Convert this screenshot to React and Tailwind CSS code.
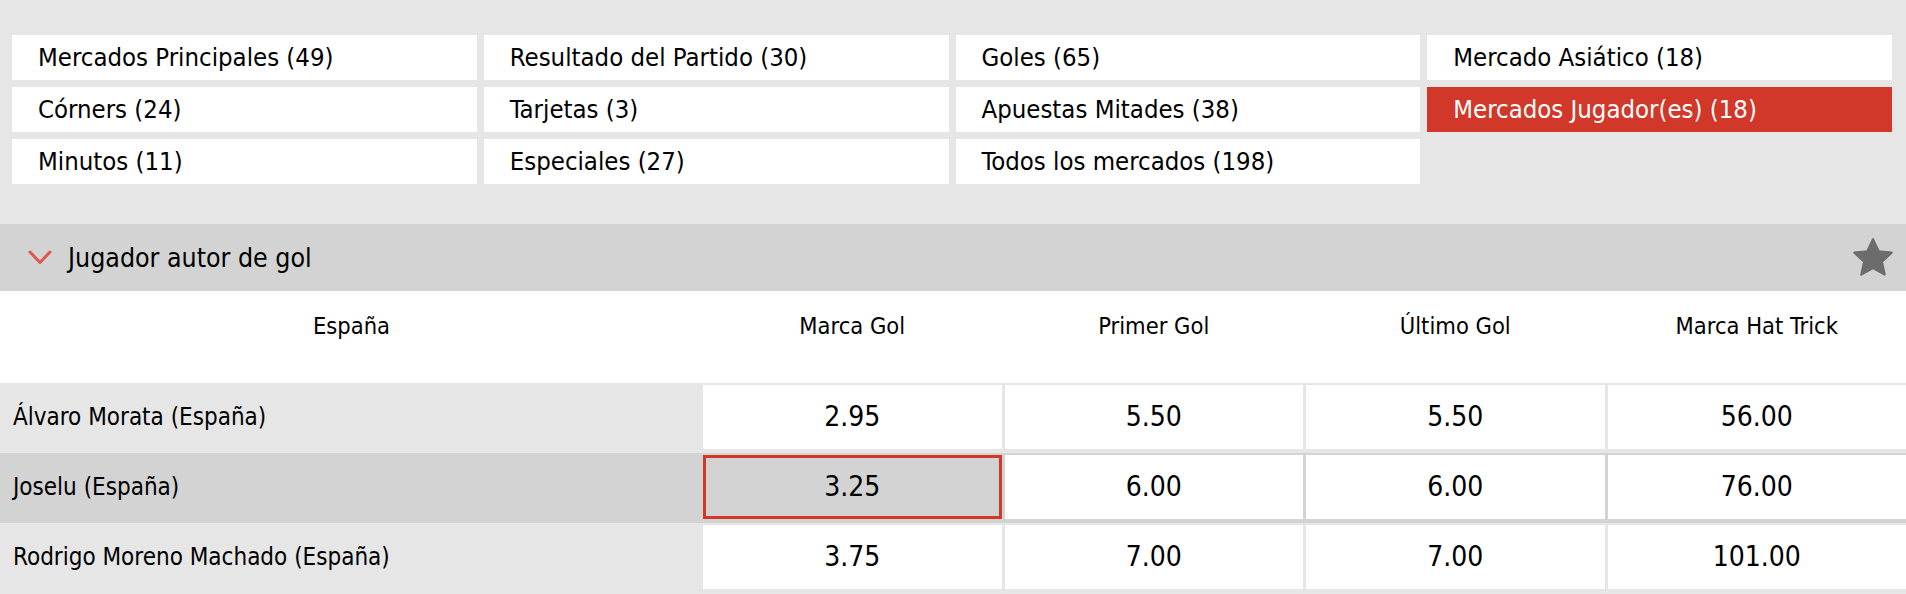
const font = "font-['DejaVu_Sans_Condensed','DejaVu_Sans',sans-serif] font-stretch-condensed";

const tabs = [
  { label: 'Mercados Principales (49)' },
  { label: 'Resultado del Partido (30)' },
  { label: 'Goles (65)' },
  { label: 'Mercado Asiático (18)' },
  { label: 'Córners (24)' },
  { label: 'Tarjetas (3)' },
  { label: 'Apuestas Mitades (38)' },
  { label: 'Mercados Jugador(es) (18)', active: true },
  { label: 'Minutos (11)' },
  { label: 'Especiales (27)' },
  { label: 'Todos los mercados (198)' },
];

const columns = ['Marca Gol', 'Primer Gol', 'Último Gol', 'Marca Hat Trick'];

const players = [
  { name: 'Álvaro Morata (España)', odds: ['2.95', '5.50', '5.50', '56.00'] },
  { name: 'Joselu (España)', odds: ['3.25', '6.00', '6.00', '76.00'], hover: true, selected: 0 },
  { name: 'Rodrigo Moreno Machado (España)', odds: ['3.75', '7.00', '7.00', '101.00'] },
  { name: '', odds: ['', '', '', ''] },
];

function Chevron() {
  return (
    <svg width="26" height="17" viewBox="0 0 26 17" className="blur-[0.5px]">
      <polyline points="3,3 13,13.5 23,3" fill="none" stroke="#e0564b" strokeWidth="3" strokeLinecap="round" strokeLinejoin="round" />
    </svg>
  );
}

function Star() {
  return (
    <svg width="44" height="42" viewBox="0 0 24 23" className="blur-[0.5px]">
      <path
        d="M12 1.2l3.1 6.6 7.1.8-5.3 4.9 1.5 7.1L12 17l-6.4 3.6 1.5-7.1-5.3-4.9 7.1-.8z"
        fill="#6c6c6c"
        stroke="#6c6c6c"
        strokeWidth="1.2"
        strokeLinejoin="round"
      />
    </svg>
  );
}

export default function App() {
  return (
    <div className={`${font} bg-[#e6e6e6] h-[594px] w-full overflow-hidden text-black`}>
      {/* market tabs */}
      <div className="pt-[35px] pb-[40px] pl-[12px] pr-[14px]">
        <div className="grid grid-cols-4 gap-[7px]">
          {tabs.map((t) => (
            <div
              key={t.label}
              className={`h-[45px] flex items-center pl-[26px] text-[25.5px] ${
                t.active ? 'bg-[#d2382a] text-white' : 'bg-white text-black'
              }`}
            >
              {t.label}
            </div>
          ))}
        </div>
      </div>

      {/* section header */}
      <div className="h-[67px] bg-[#d3d3d3] flex items-center pl-[27px] pr-[11px]">
        <Chevron />
        <span className="ml-[15px] text-[26.5px] flex-1">Jugador autor de gol</span>
        <Star />
      </div>

      {/* column headers */}
      <div className="h-[92px] bg-white flex pt-[18px] text-[23.5px]">
        <div className="w-[703px] shrink-0 text-center">España</div>
        <div className="flex-1 grid grid-cols-4 gap-[3px]">
          {columns.map((c) => (
            <div key={c} className="text-center">
              {c}
            </div>
          ))}
        </div>
      </div>

      {/* players */}
      {players.map((p, i) => (
        <div
          key={i}
          className={`h-[70px] flex pt-[2px] pb-[4px] ${p.hover ? 'bg-[#d3d3d3]' : 'bg-[#e6e6e6]'}`}
        >
          <div className="w-[703px] shrink-0 flex items-center pl-[13px] text-[24px]">{p.name}</div>
          <div className="flex-1 grid grid-cols-4 gap-[3px]">
            {p.odds.map((o, j) => (
              <div
                key={j}
                className={`flex items-center justify-center text-[28px] ${
                  p.selected === j ? 'bg-[#d3d3d3] border-[3px] border-[#d2382a]' : 'bg-white'
                }`}
              >
                {o}
              </div>
            ))}
          </div>
        </div>
      ))}
    </div>
  );
}
